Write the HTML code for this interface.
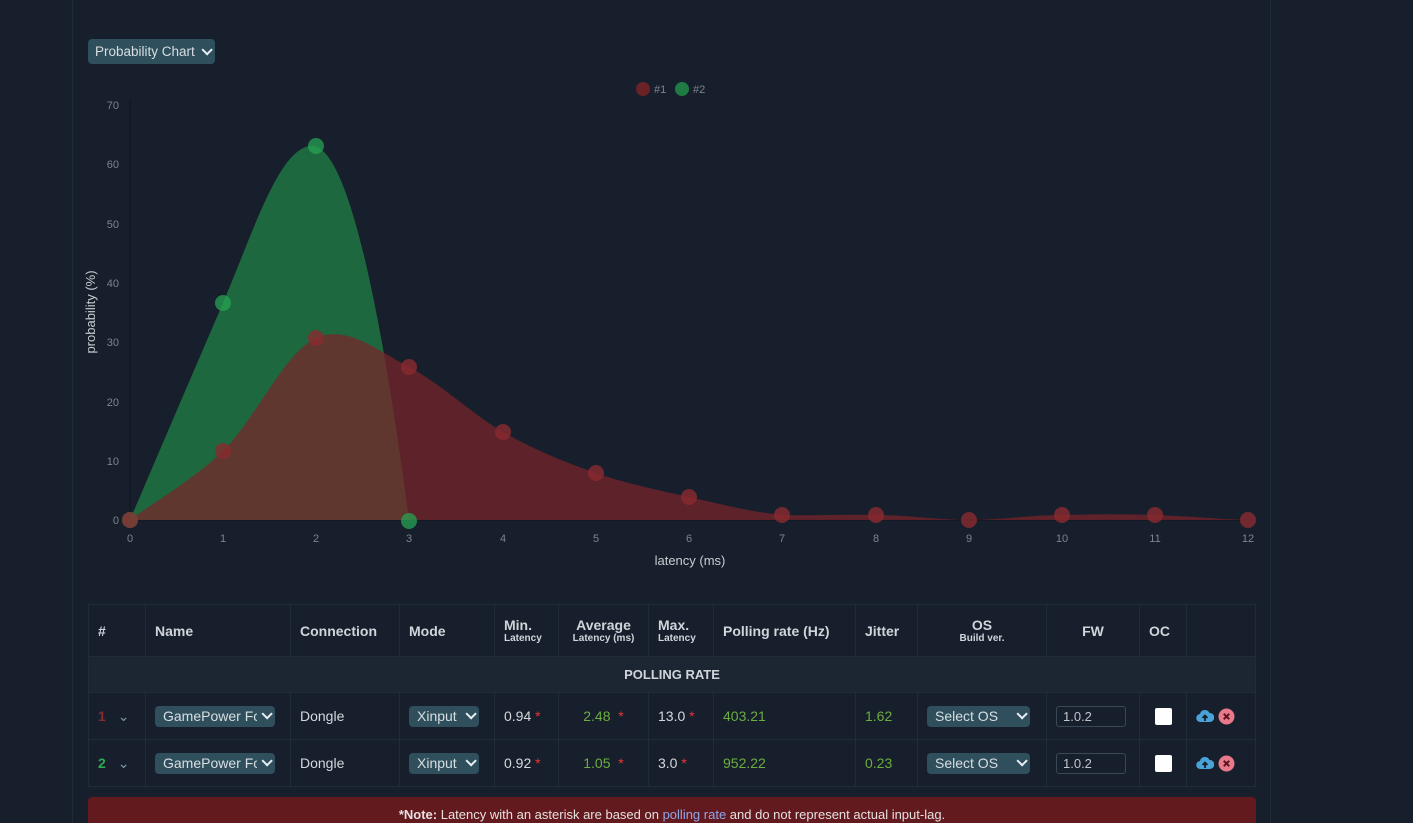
<!DOCTYPE html>
<html><head><meta charset="utf-8"><style>
*{box-sizing:border-box;margin:0;padding:0}
html,body{width:1413px;height:823px;overflow:hidden}
body{background:#171f2c;font-family:"Liberation Sans",sans-serif;color:#d5d9de;position:relative}
.frame{position:absolute;left:72px;top:-2px;width:1199px;height:830px;border-left:1px solid #222b38;border-right:1px solid #222b38}
.sel{position:absolute;background:#2f4f5c;color:#d8dee2;border-radius:4px;font-size:14px;padding:0 6px 0 8px;display:flex;align-items:center;justify-content:space-between;white-space:nowrap;overflow:hidden}
.sel span{overflow:hidden;flex:1;min-width:0}
.sel:after{content:"";flex:none;width:6px;height:6px;border-right:2px solid #e8eef2;border-bottom:2px solid #e8eef2;transform:rotate(45deg) translateY(-3px);margin-left:4px}
table{position:absolute;left:88px;top:604px;width:1168px;border-collapse:collapse;font-size:14px}
td,th{border:1px solid #222b38;padding:0 9px;text-align:left;white-space:nowrap;vertical-align:middle}
th{font-weight:bold;height:52px;color:#d0d5da;font-size:14px}
th small{display:block;font-size:10px;font-weight:bold}
td{height:47px;position:relative}
.g{color:#6cad3f}.r{color:#e33}
.inp{display:inline-block;width:70px;height:21px;border:1px solid #3a4757;border-radius:3px;font-size:13px;padding:2px 6px;color:#bfc5cb}
.cb{display:inline-block;width:17px;height:17px;background:#fff;border-radius:2px;vertical-align:middle}
.ic{display:inline-block;vertical-align:middle}
</style></head><body>
<div class="frame"></div>
<div class="sel" style="left:88px;top:39px;width:127px;height:25px;font-size:13.5px;padding-left:7px"><span>Probability Chart</span></div>
<svg width="1413" height="600" style="position:absolute;left:0;top:0">
<g font-size="11" fill="#7d848c" font-family="Liberation Sans">
<text x="119" y="109" text-anchor="end">70</text><text x="119" y="168" text-anchor="end">60</text><text x="119" y="228" text-anchor="end">50</text><text x="119" y="287" text-anchor="end">40</text><text x="119" y="346" text-anchor="end">30</text><text x="119" y="406" text-anchor="end">20</text><text x="119" y="465" text-anchor="end">10</text><text x="119" y="524" text-anchor="end">0</text>
<text x="130" y="542" text-anchor="middle">0</text><text x="223" y="542" text-anchor="middle">1</text><text x="316" y="542" text-anchor="middle">2</text><text x="409" y="542" text-anchor="middle">3</text><text x="503" y="542" text-anchor="middle">4</text><text x="596" y="542" text-anchor="middle">5</text><text x="689" y="542" text-anchor="middle">6</text><text x="782" y="542" text-anchor="middle">7</text><text x="876" y="542" text-anchor="middle">8</text><text x="969" y="542" text-anchor="middle">9</text><text x="1062" y="542" text-anchor="middle">10</text><text x="1155" y="542" text-anchor="middle">11</text><text x="1248" y="542" text-anchor="middle">12</text>
<text x="654" y="93">#1</text><text x="693" y="93">#2</text>
</g>
<text x="690" y="565" font-size="13" fill="#c8cdd2" text-anchor="middle">latency (ms)</text>
<text transform="translate(95,312) rotate(-90)" font-size="13" fill="#c8cdd2" text-anchor="middle">probability (%)</text>
<line x1="130" y1="100" x2="130" y2="520" stroke="#0f151e"/>
<line x1="130" y1="520" x2="1248" y2="520" stroke="#0f151e"/>
<circle cx="643" cy="89" r="7" fill="#6a2227"/><circle cx="682" cy="89" r="7" fill="#1f7a44"/>
<path d="M130,520 C161,447 192,375 223,303 C254,230 280,146 312,146 C347,146 380,300 409,520 Z" fill="#1f7a44" fill-opacity="0.8"/>
<path d="M130,520 C145,508 192,481 223,451 C254,421 285,352 316,338 C347,324 378,351 409,367 C440,383 472,414 503,432 C534,450 565,462 596,473 C627,484 658,490 689,497 C720,504 751,512 782,515 C813,516 845,514 876,515 C907,515 938,520 969,520 C1000,520 1031,515 1062,515 C1093,514 1124,514 1155,515 C1186,516 1217,519 1248,520 Z" fill="#7a242a" fill-opacity="0.72"/>
<g fill="#27a352" fill-opacity="0.75"><circle cx="130" cy="520" r="8"/><circle cx="223" cy="303" r="8"/><circle cx="316" cy="146" r="8"/><circle cx="409" cy="521" r="8"/></g>
<g fill="#8a2a2f" fill-opacity="0.8"><circle cx="130" cy="520" r="8"/><circle cx="223" cy="451" r="8"/><circle cx="316" cy="338" r="8"/><circle cx="409" cy="367" r="8"/><circle cx="503" cy="432" r="8"/><circle cx="596" cy="473" r="8"/><circle cx="689" cy="497" r="8"/><circle cx="782" cy="515" r="8"/><circle cx="876" cy="515" r="8"/><circle cx="969" cy="520" r="8"/><circle cx="1062" cy="515" r="8"/><circle cx="1155" cy="515" r="8"/><circle cx="1248" cy="520" r="8"/></g>
</svg>
<table>
<tr><th style="width:57px">#</th><th style="width:145px">Name</th><th style="width:109px">Connection</th><th style="width:95px">Mode</th><th style="width:64px">Min.<small>Latency</small></th><th style="width:90px;text-align:center">Average<small>Latency (ms)</small></th><th style="width:65px">Max.<small>Latency</small></th><th style="width:142px">Polling rate (Hz)</th><th style="width:62px">Jitter</th><th style="width:129px;text-align:center">OS<small>Build ver.</small></th><th style="width:93px;text-align:center">FW</th><th style="width:47px">OC</th><th></th></tr>
<tr><td colspan="13" style="height:36px;background:#1c2633;text-align:center;font-weight:bold;font-size:13px;color:#d0d5da">POLLING RATE</td></tr>
<tr><td><b style="color:#8b2a2a">1</b> <span style="color:#7f97b0;margin-left:8px">&#8964;</span></td><td><div class="sel" style="position:static;width:120px;height:21px"><span>GamePower Fc</span></div></td><td>Dongle</td><td><div class="sel" style="position:static;width:70px;height:21px"><span>Xinput</span></div></td><td>0.94 <span class="r">*</span></td><td style="text-align:center"><span class="g">2.48</span> &nbsp;<span class="r">*</span></td><td>13.0 <span class="r">*</span></td><td class="g">403.21</td><td class="g">1.62</td><td><div class="sel" style="position:static;width:103px;height:21px"><span>Select OS</span></div></td><td><span class="inp">1.0.2</span></td><td style="text-align:center"><span class="cb"></span></td><td><svg class="ic" width="18" height="16" viewBox="0 0 18 16"><path d="M4.5 14 A4 4 0 0 1 4 6 A5 5 0 0 1 13.5 5 A4.5 4.5 0 0 1 14 14 Z" fill="#4aa3d8"/><path d="M9 13 V8 M6.5 10 L9 7.5 L11.5 10" stroke="#17202c" stroke-width="1.8" fill="none"/></svg> <svg class="ic" width="17" height="17" viewBox="0 0 17 17"><circle cx="8.5" cy="8.5" r="8" fill="#e8788a"/><path d="M5.8 5.8 L11.2 11.2 M11.2 5.8 L5.8 11.2" stroke="#5a1420" stroke-width="2"/></svg></td></tr>
<tr><td><b style="color:#2eaa4f">2</b> <span style="color:#7f97b0;margin-left:8px">&#8964;</span></td><td><div class="sel" style="position:static;width:120px;height:21px"><span>GamePower Fc</span></div></td><td>Dongle</td><td><div class="sel" style="position:static;width:70px;height:21px"><span>Xinput</span></div></td><td>0.92 <span class="r">*</span></td><td style="text-align:center"><span class="g">1.05</span> &nbsp;<span class="r">*</span></td><td>3.0 <span class="r">*</span></td><td class="g">952.22</td><td class="g">0.23</td><td><div class="sel" style="position:static;width:103px;height:21px"><span>Select OS</span></div></td><td><span class="inp">1.0.2</span></td><td style="text-align:center"><span class="cb"></span></td><td><svg class="ic" width="18" height="16" viewBox="0 0 18 16"><path d="M4.5 14 A4 4 0 0 1 4 6 A5 5 0 0 1 13.5 5 A4.5 4.5 0 0 1 14 14 Z" fill="#4aa3d8"/><path d="M9 13 V8 M6.5 10 L9 7.5 L11.5 10" stroke="#17202c" stroke-width="1.8" fill="none"/></svg> <svg class="ic" width="17" height="17" viewBox="0 0 17 17"><circle cx="8.5" cy="8.5" r="8" fill="#e8788a"/><path d="M5.8 5.8 L11.2 11.2 M11.2 5.8 L5.8 11.2" stroke="#5a1420" stroke-width="2"/></svg></td></tr>
</table>
<div style="position:absolute;left:88px;top:797px;width:1168px;height:40px;background:#631a1f;border-radius:4px;text-align:center;font-size:13px;padding-top:10px;color:#e6e0e0"><b>*Note:</b> Latency with an asterisk are based on <span style="color:#8fa6e8">polling rate</span> and do not represent actual input-lag.</div>
</body></html>
